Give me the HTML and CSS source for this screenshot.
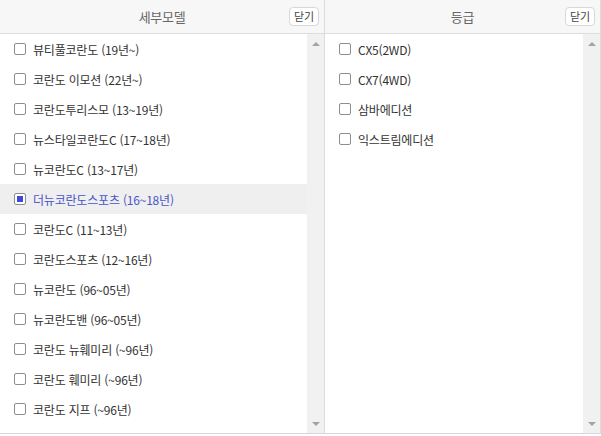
FILE: index.html
```html
<!DOCTYPE html>
<html lang="ko">
<head>
<meta charset="utf-8">
<link rel="stylesheet" href="styles.css">
</head>
<body>
<div class="frame">
  <section class="col col-left">
    <header class="head">
      <span class="title">세부모델</span>
      <button class="close">닫기</button>
    </header>
    <div class="body">
      <ul class="list">
        <li class="row"><span class="cb"></span>뷰티풀코란도 (19년~)</li>
        <li class="row"><span class="cb"></span>코란도 이모션 (22년~)</li>
        <li class="row"><span class="cb"></span>코란도투리스모 (13~19년)</li>
        <li class="row"><span class="cb"></span>뉴스타일코란도C (17~18년)</li>
        <li class="row"><span class="cb"></span>뉴코란도C (13~17년)</li>
        <li class="row sel"><span class="cb on"></span>더뉴코란도스포츠 (16~18년)</li>
        <li class="row"><span class="cb"></span>코란도C (11~13년)</li>
        <li class="row"><span class="cb"></span>코란도스포츠 (12~16년)</li>
        <li class="row"><span class="cb"></span>뉴코란도 (96~05년)</li>
        <li class="row"><span class="cb"></span>뉴코란도밴 (96~05년)</li>
        <li class="row"><span class="cb"></span>코란도 뉴훼미리 (~96년)</li>
        <li class="row"><span class="cb"></span>코란도 훼미리 (~96년)</li>
        <li class="row"><span class="cb"></span>코란도 지프 (~96년)</li>
      </ul>
      <div class="sbar"><span class="arr up"></span><span class="arr down"></span></div>
    </div>
  </section>
  <section class="col col-right">
    <header class="head">
      <span class="title">등급</span>
      <button class="close">닫기</button>
    </header>
    <div class="body">
      <ul class="list">
        <li class="row"><span class="cb"></span>CX5(2WD)</li>
        <li class="row"><span class="cb"></span>CX7(4WD)</li>
        <li class="row"><span class="cb"></span>삼바에디션</li>
        <li class="row"><span class="cb"></span>익스트림에디션</li>
      </ul>
      <div class="sbar"><span class="arr up"></span><span class="arr down"></span></div>
    </div>
  </section>
</div>
</body>
</html>
```
FILE: styles.css
```css
* { box-sizing: border-box; }
html, body { margin: 0; padding: 0; background: #fff; }
body {
  font-family: "Noto Sans CJK KR", "Noto Sans", sans-serif;
  font-size: 12px;
  color: #333;
}
.frame {
  width: 601px;
  height: 434px;
  display: flex;
  border-bottom: 1px solid #d6d6d6;
  border-right: 1px solid #dcdcdc;
}
.col {
  display: flex;
  flex-direction: column;
}
.col-left { width: 325px; border-right: 1px solid #dcdcdc; }
.col-right { flex: 1; }
.head {
  height: 34px;
  flex: none;
  position: relative;
  display: flex;
  align-items: center;
  justify-content: center;
  background: #f7f7f7;
  border-bottom: 1px solid #dcdcdc;
}
.title {
  font-size: 13px;
  color: #666;
  letter-spacing: -0.3px;
}
.close {
  position: absolute;
  right: 5px;
  top: 7px;
  height: 19px;
  width: 30px;
  padding: 0;
  font-family: inherit;
  font-size: 11px;
  line-height: 17px;
  color: #444;
  background: #fff;
  border: 1px solid #d8d8d8;
  border-radius: 4px;
}
.body {
  flex: 1;
  display: flex;
}
.list {
  list-style: none;
  margin: 0;
  padding: 0;
  flex: 1;
}
.row {
  height: 30px;
  display: flex;
  align-items: center;
  padding-left: 14px;
  white-space: nowrap;
  letter-spacing: -0.2px;
}
.row.sel { background: #efefef; color: #4a55c8; }
.cb {
  width: 12px;
  height: 12px;
  border: 1px solid #8e8e8e;
  border-radius: 2px;
  background: #fff;
  margin-right: 7px;
  flex: none;
  display: flex;
  align-items: center;
  justify-content: center;
}
.cb.on::after {
  content: "";
  width: 6px;
  height: 6px;
  background: #3f49d6;
}
.sbar {
  width: 17px;
  flex: none;
  background: #f1f1f1;
  display: flex;
  flex-direction: column;
  justify-content: space-between;
  align-items: center;
  padding: 8px 0 7px;
}
.arr {
  width: 0;
  height: 0;
  border-left: 4px solid transparent;
  border-right: 4px solid transparent;
}
.arr.up { border-bottom: 4px solid #a3a3a3; }
.arr.down { border-top: 4px solid #a3a3a3; }
```
